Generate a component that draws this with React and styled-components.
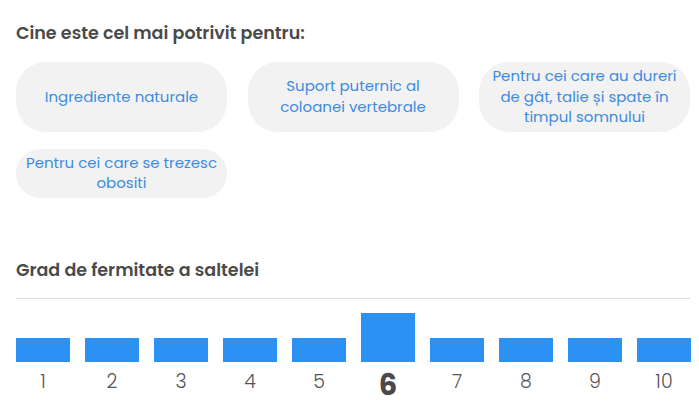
import React from "react";
import styled, { createGlobalStyle } from "styled-components";

const Global = createGlobalStyle`
  html, body { margin: 0; padding: 0; background: #fff; }
  body { font-family: Poppins, "Open Sans", "Noto Sans", sans-serif; }
`;

const Page = styled.div`
  width: 674px;
  padding: 21px 9px 0 16px;
`;

const Heading = styled.h2`
  margin: 0;
  font-size: 17.5px;
  line-height: 24px;
  font-weight: 600;
  color: #4a4a4a;
`;

const PillGrid = styled.div`
  display: grid;
  grid-template-columns: repeat(3, 211px);
  column-gap: 20.5px;
  row-gap: 17px;
  margin-top: 17px;
`;

const Pill = styled.div`
  display: flex;
  align-items: center;
  justify-content: center;
  text-align: center;
  background: #f2f2f2;
  border-radius: 30px;
  padding: 4px 7px;
  font-size: 15px;
  line-height: 20.5px;
  color: #3d8be0;
`;

const Section = styled.div`
  margin-top: 60px;
`;

const Divider = styled.div`
  height: 1px;
  background: #dcdcdc;
  margin-top: 16px;
`;

const Scale = styled.div`
  display: grid;
  grid-template-columns: repeat(10, 54px);
  column-gap: 15px;
  margin-top: 14px;
`;

const Step = styled.div`
  display: flex;
  flex-direction: column;
  align-items: center;
`;

const BarSlot = styled.div`
  height: 49px;
  width: 100%;
  display: flex;
  align-items: flex-end;
`;

const Bar = styled.div`
  width: 100%;
  height: ${(p) => (p.$active ? 49 : 24)}px;
  background: #2b91f2;
`;

const Num = styled.div`
  margin-top: ${(p) => (p.$active ? 8 : 9)}px;
  font-size: ${(p) => (p.$active ? 29 : 19)}px;
  line-height: ${(p) => (p.$active ? 30 : 22)}px;
  font-weight: ${(p) => (p.$active ? 700 : 300)};
  color: ${(p) => (p.$active ? "#4a4a4a" : "#555")};
`;

const pills = [
  "Ingrediente naturale",
  "Suport puternic al coloanei vertebrale",
  "Pentru cei care au dureri de gât, talie și spate în timpul somnului",
  "Pentru cei care se trezesc obositi",
];

export default function App() {
  const active = 6;
  return (
    <Page>
      <Global />
      <Heading>Cine este cel mai potrivit pentru:</Heading>
      <PillGrid>
        {pills.map((p) => (
          <Pill key={p}>{p}</Pill>
        ))}
      </PillGrid>
      <Section>
        <Heading>Grad de fermitate a saltelei</Heading>
        <Divider />
        <Scale>
          {Array.from({ length: 10 }, (_, i) => i + 1).map((n) => (
            <Step key={n}>
              <BarSlot>
                <Bar $active={n === active} />
              </BarSlot>
              <Num $active={n === active}>{n}</Num>
            </Step>
          ))}
        </Scale>
      </Section>
    </Page>
  );
}
